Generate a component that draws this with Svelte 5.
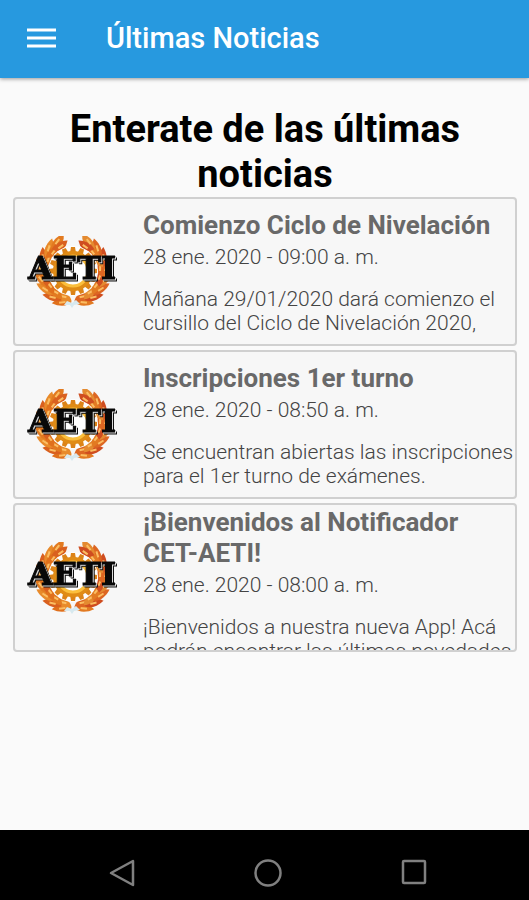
<script>
  const news = [
    {
      title: 'Comienzo Ciclo de Nivelación',
      date: '28 ene. 2020 - 09:00 a. m.',
      body: 'Mañana 29/01/2020 dará comienzo el cursillo del Ciclo de Nivelación 2020,'
    },
    {
      title: 'Inscripciones 1er turno',
      date: '28 ene. 2020 - 08:50 a. m.',
      body: 'Se encuentran abiertas las inscripciones para el 1er turno de exámenes.'
    },
    {
      title: '¡Bienvenidos al Notificador CET-AETI!',
      date: '28 ene. 2020 - 08:00 a. m.',
      body: '¡Bienvenidos a nuestra nueva App! Acá podrán encontrar las últimas novedades',
      tall: true
    }
  ];

  const teeth = Array.from({ length: 16 }, (_, i) => i * 22.5);
  // Leaf angles, clockwise from the bottom of the wreath to its open top.
  const leaves = Array.from({ length: 8 }, (_, i) => 12 + i * 19);
  const amber = ['#e0701c', '#d9601f', '#e88a2a', '#e27a20'];
  const ember = ['#e27a22', '#cf4d20', '#dd6622', '#e48a30'];
</script>

{#snippet laurel(colors)}
  {#each leaves as angle, i}
    <g transform="rotate({angle} 54 35)">
      <path d="M59 66 C55 60 49 61 43 67 L40 71 C48 73 56 71 59 66Z" fill={colors[i % 4]} />
      <path d="M59 65 C56 58 50 58 45 60 L41 63 C46 67 54 68 59 65Z" fill={colors[(i + 2) % 4]} />
      <path d="M53 67 L47 69 M53 62 L47 62" stroke="#fbbd62" stroke-width="2" />
    </g>
  {/each}
{/snippet}

<div class="screen">
  <header>
    <button class="menu" aria-label="Abrir menú">
      <svg width="29" height="20" viewBox="0 0 29 20" aria-hidden="true">
        <path d="M0 2h29M0 10h29M0 18h29" stroke="#fff" stroke-width="3" />
      </svg>
    </button>
    <span class="bar-title">Últimas Noticias</span>
  </header>

  <main>
    <h1>Enterate de las últimas noticias</h1>
    <div class="list">
      {#each news as item}
        <article class:tall={item.tall}>
          <svg class="logo" width="108" height="72" viewBox="0 0 108 72" role="img" aria-label="AETI">
            {@render laurel(amber)}
            <g transform="translate(108 0) scale(-1 1)">{@render laurel(ember)}</g>
            <circle cx="54" cy="35" r="25" fill="#fdfdfd" />
            {#each teeth as angle}
              <path d="M51 17 L52 11 L56 11 L57 17Z" fill="#dc8318" transform="rotate({angle} 54 35)" />
            {/each}
            <circle cx="54" cy="35" r="17" fill="#fff" stroke="#e08c16" stroke-width="6" />
            <circle cx="54" cy="35" r="15" fill="none" stroke="#fbbf3c" stroke-width="3" />
            <path d="M48 65l5 2 4-3 4 4-6 1-2 3-2-3-6 0z" fill="#d7e9ef" />
            <text class="mark" x="53" y="43">AETI</text>
          </svg>
          <div class="copy">
            <h2>{item.title}</h2>
            <time>{item.date}</time>
            <p>{item.body}</p>
          </div>
        </article>
      {/each}
    </div>
  </main>

  <nav aria-label="Navegación del sistema">
    <button aria-label="Atrás">
      <svg width="28" height="30" viewBox="0 0 28 30" aria-hidden="true">
        <path d="M25 3v24L3 15z" />
      </svg>
    </button>
    <button aria-label="Inicio">
      <svg width="28" height="30" viewBox="0 0 28 30" aria-hidden="true">
        <circle cx="14" cy="15" r="12.5" />
      </svg>
    </button>
    <button aria-label="Recientes">
      <svg width="28" height="30" viewBox="0 0 28 30" aria-hidden="true">
        <rect x="3" y="3" width="22" height="22" rx="1" />
      </svg>
    </button>
  </nav>
</div>

<style>
  :global(body) {
    margin: 0;
    background: #fafafa;
  }

  .screen {
    display: flex;
    flex-direction: column;
    min-height: 100vh;
    font-family: Roboto, 'Noto Sans', sans-serif;
    color: #696969;
    background: #fafafa;
  }

  button {
    display: flex;
    padding: 0;
    border: 0;
    background: none;
    cursor: pointer;
  }

  header {
    display: flex;
    align-items: center;
    gap: 50px;
    padding: 18px 27px 20px;
    background: #2799df;
    box-shadow: 0 1px 4px rgba(0, 0, 0, 0.4);
  }

  .bar-title {
    font-size: 29px;
    line-height: 40px;
    font-weight: 500;
    color: #fff;
  }

  main {
    flex: 1;
    padding: 29px 12px 0 13px;
  }

  h1 {
    margin: 0;
    padding: 0 40px;
    font-size: 38px;
    line-height: 45px;
    font-weight: 700;
    text-align: center;
    color: #000;
  }

  .list {
    display: flex;
    flex-direction: column;
    gap: 4px;
  }

  article {
    display: flex;
    align-items: center;
    gap: 16px;
    box-sizing: border-box;
    height: 149px;
    padding-left: 4px;
    overflow: hidden;
    border: 2px solid #d0d0d0;
    border-radius: 4px;
    background: #f7f7f7;
  }

  .logo {
    flex: none;
  }

  .mark {
    font-family: 'DejaVu Serif', serif;
    font-size: 32px;
    font-weight: 700;
    text-anchor: middle;
    fill: #080808;
    stroke: #080808;
    stroke-width: 1;
    filter: drop-shadow(1px 1px 0 #ddd) drop-shadow(1px 1px 0 #111);
  }

  .copy {
    flex: 1;
    align-self: flex-start;
    min-width: 0;
    padding-top: 11px;
  }

  .tall .copy {
    padding-top: 2px;
  }

  h2 {
    margin: 0;
    font-size: 26px;
    line-height: 31px;
    font-weight: 700;
  }

  time {
    display: block;
    font-size: 21px;
    line-height: 32px;
    font-weight: 300;
    color: #444;
  }

  p {
    margin: 14px 0 0;
    font-size: 21px;
    line-height: 24px;
    font-weight: 300;
    color: #444;
  }

  nav {
    display: flex;
    justify-content: space-around;
    padding: 28px 42px 12px 49px;
    background: #000;
  }

  nav path,
  nav circle,
  nav rect {
    fill: none;
    stroke: #808080;
    stroke-width: 2.5;
    stroke-linejoin: round;
  }
</style>
